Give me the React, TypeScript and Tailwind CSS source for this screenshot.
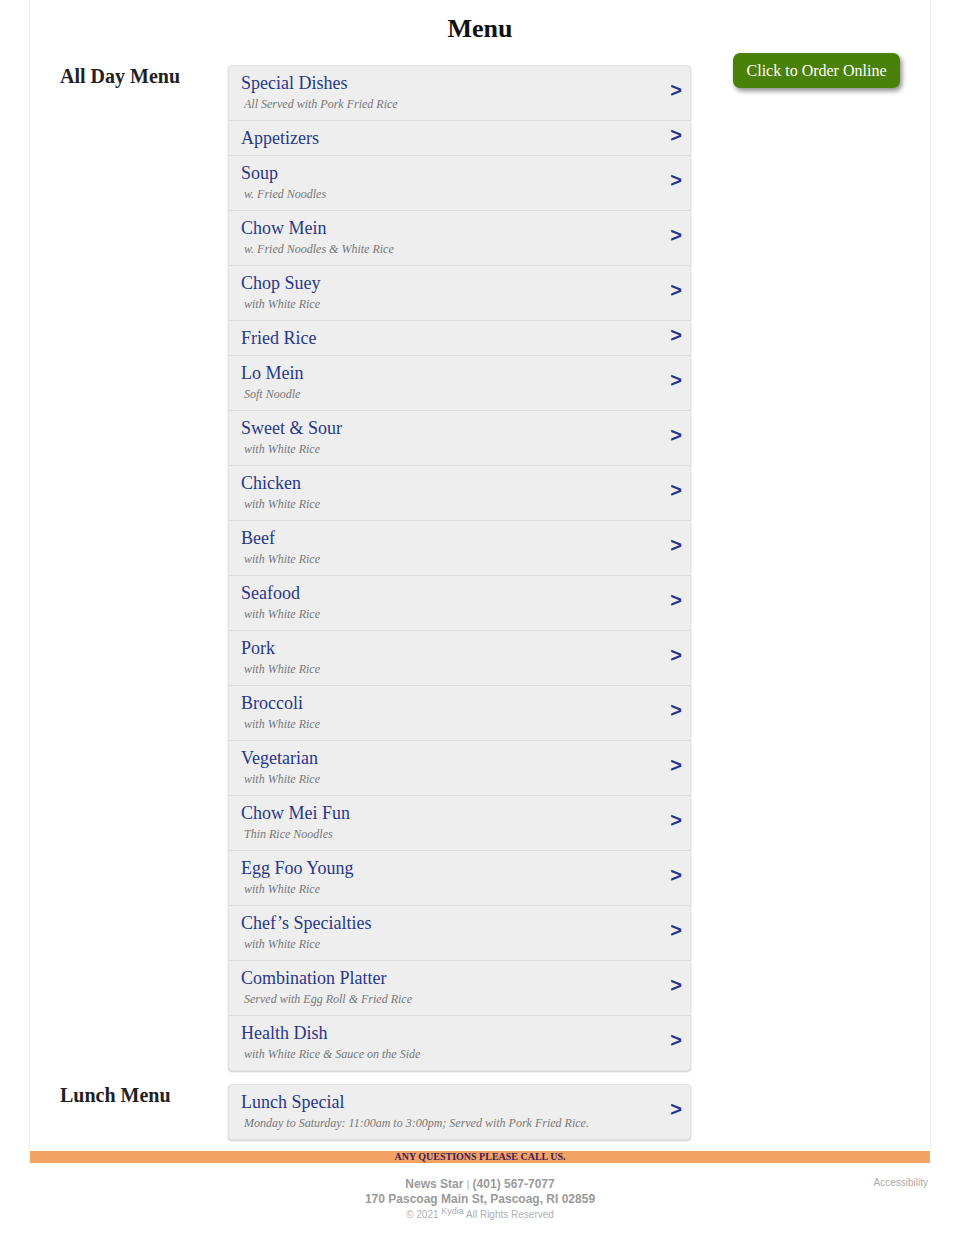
import React from 'react';

interface MenuCategory {
  name: string;
  note?: string;
}

const allDay: MenuCategory[] = [
  { name: 'Special Dishes', note: 'All Served with Pork Fried Rice' },
  { name: 'Appetizers' },
  { name: 'Soup', note: 'w. Fried Noodles' },
  { name: 'Chow Mein', note: 'w. Fried Noodles & White Rice' },
  { name: 'Chop Suey', note: 'with White Rice' },
  { name: 'Fried Rice' },
  { name: 'Lo Mein', note: 'Soft Noodle' },
  { name: 'Sweet & Sour', note: 'with White Rice' },
  { name: 'Chicken', note: 'with White Rice' },
  { name: 'Beef', note: 'with White Rice' },
  { name: 'Seafood', note: 'with White Rice' },
  { name: 'Pork', note: 'with White Rice' },
  { name: 'Broccoli', note: 'with White Rice' },
  { name: 'Vegetarian', note: 'with White Rice' },
  { name: 'Chow Mei Fun', note: 'Thin Rice Noodles' },
  { name: 'Egg Foo Young', note: 'with White Rice' },
  { name: 'Chef\u2019s Specialties', note: 'with White Rice' },
  { name: 'Combination Platter', note: 'Served with Egg Roll & Fried Rice' },
  { name: 'Health Dish', note: 'with White Rice & Sauce on the Side' },
];

const lunch: MenuCategory[] = [
  { name: 'Lunch Special', note: 'Monday to Saturday: 11:00am to 3:00pm; Served with Pork Fried Rice.' },
];

const serif = "font-['Liberation_Serif','Times_New_Roman',serif]";
const sans = "font-['Liberation_Sans',Arial,sans-serif]";

const CategoryRow: React.FC<{ item: MenuCategory }> = ({ item }) => (
  <a href="#" className="flex items-center justify-between border-b border-[#dcdcdc] last:border-b-0 pl-3 pr-2">
    <div className="pt-1.5 pb-1.5">
      <div className={`${serif} text-[18px] leading-[22px] text-[#27388a]`}>{item.name}</div>
      {item.note && (
        <div className={`${serif} italic text-[12px] leading-4 text-[#777] pl-[3px] my-0.5`}>{item.note}</div>
      )}
    </div>
    <span className={`${sans} font-bold text-[20px] leading-none text-[#26318c] pb-1.5`}>&gt;</span>
  </a>
);

const MenuSection: React.FC<{ title: string; items: MenuCategory[] }> = ({ title, items }) => (
  <div className="grid grid-cols-[168px_463px]">
    <h2 className={`${serif} font-bold text-[20px] leading-[22px] text-[#222]`}>{title}</h2>
    <div className="rounded-[4px] bg-[#eeeeee] border border-[#e2e2e2] shadow-[0_1px_2px_rgba(0,0,0,0.2)] overflow-hidden">
      {items.map((item) => (
        <CategoryRow key={item.name} item={item} />
      ))}
    </div>
  </div>
);

export default function App() {
  return (
    <div className="bg-white min-h-[1242px]">
      <div className="mx-[29px] border-x border-[#eeeeee] pt-[14px] px-[30px] pb-[11px]">
        <h1 className={`${serif} font-bold text-[26px] leading-[30px] text-center text-[#111]`}>Menu</h1>
        <div className="flex mt-[21px]">
          <div className="flex flex-col gap-[13px]">
            <MenuSection title="All Day Menu" items={allDay} />
            <MenuSection title="Lunch Menu" items={lunch} />
          </div>
          <div className="flex-1 flex justify-end -mt-[12px]">
            <div>
              <a
                href="#"
                className={`${serif} block w-[167px] h-[35px] leading-[35px] text-center text-[16px] text-white bg-[#4a8209] rounded-[7px] shadow-[2px_3px_5px_rgba(0,0,0,0.45)]`}
              >
                Click to Order Online
              </a>
            </div>
          </div>
        </div>
      </div>
      <div className={`mx-[30px] bg-[#f2a262] h-[12px] ${serif} font-bold uppercase text-[10px] leading-[12px] text-center text-[#3a1a5c]`}>
        Any Questions Please Call Us.
      </div>
      <div className="mx-[30px] relative pt-[14px]">
        <div className={`${sans} text-center text-[#9a9a9a]`}>
          <div className="text-[12px] leading-[14px] font-bold">
            News Star <span className="font-normal text-[10px] text-[#aaa]">|</span> (401) 567-7077
          </div>
          <div className="text-[12px] leading-[14px] font-bold">170 Pascoag Main St, Pascoag, RI 02859</div>
          <div className="text-[10px] leading-[14px] text-[#b0b0b0] mt-[2px]">
            &copy; 2021 <sup className="text-[9px]">Kydia</sup> All Rights Reserved
          </div>
        </div>
        <a href="#" className={`${sans} absolute right-[2px] top-[12px] text-[10px] text-[#aaa]`}>
          Accessibility
        </a>
      </div>
    </div>
  );
}
